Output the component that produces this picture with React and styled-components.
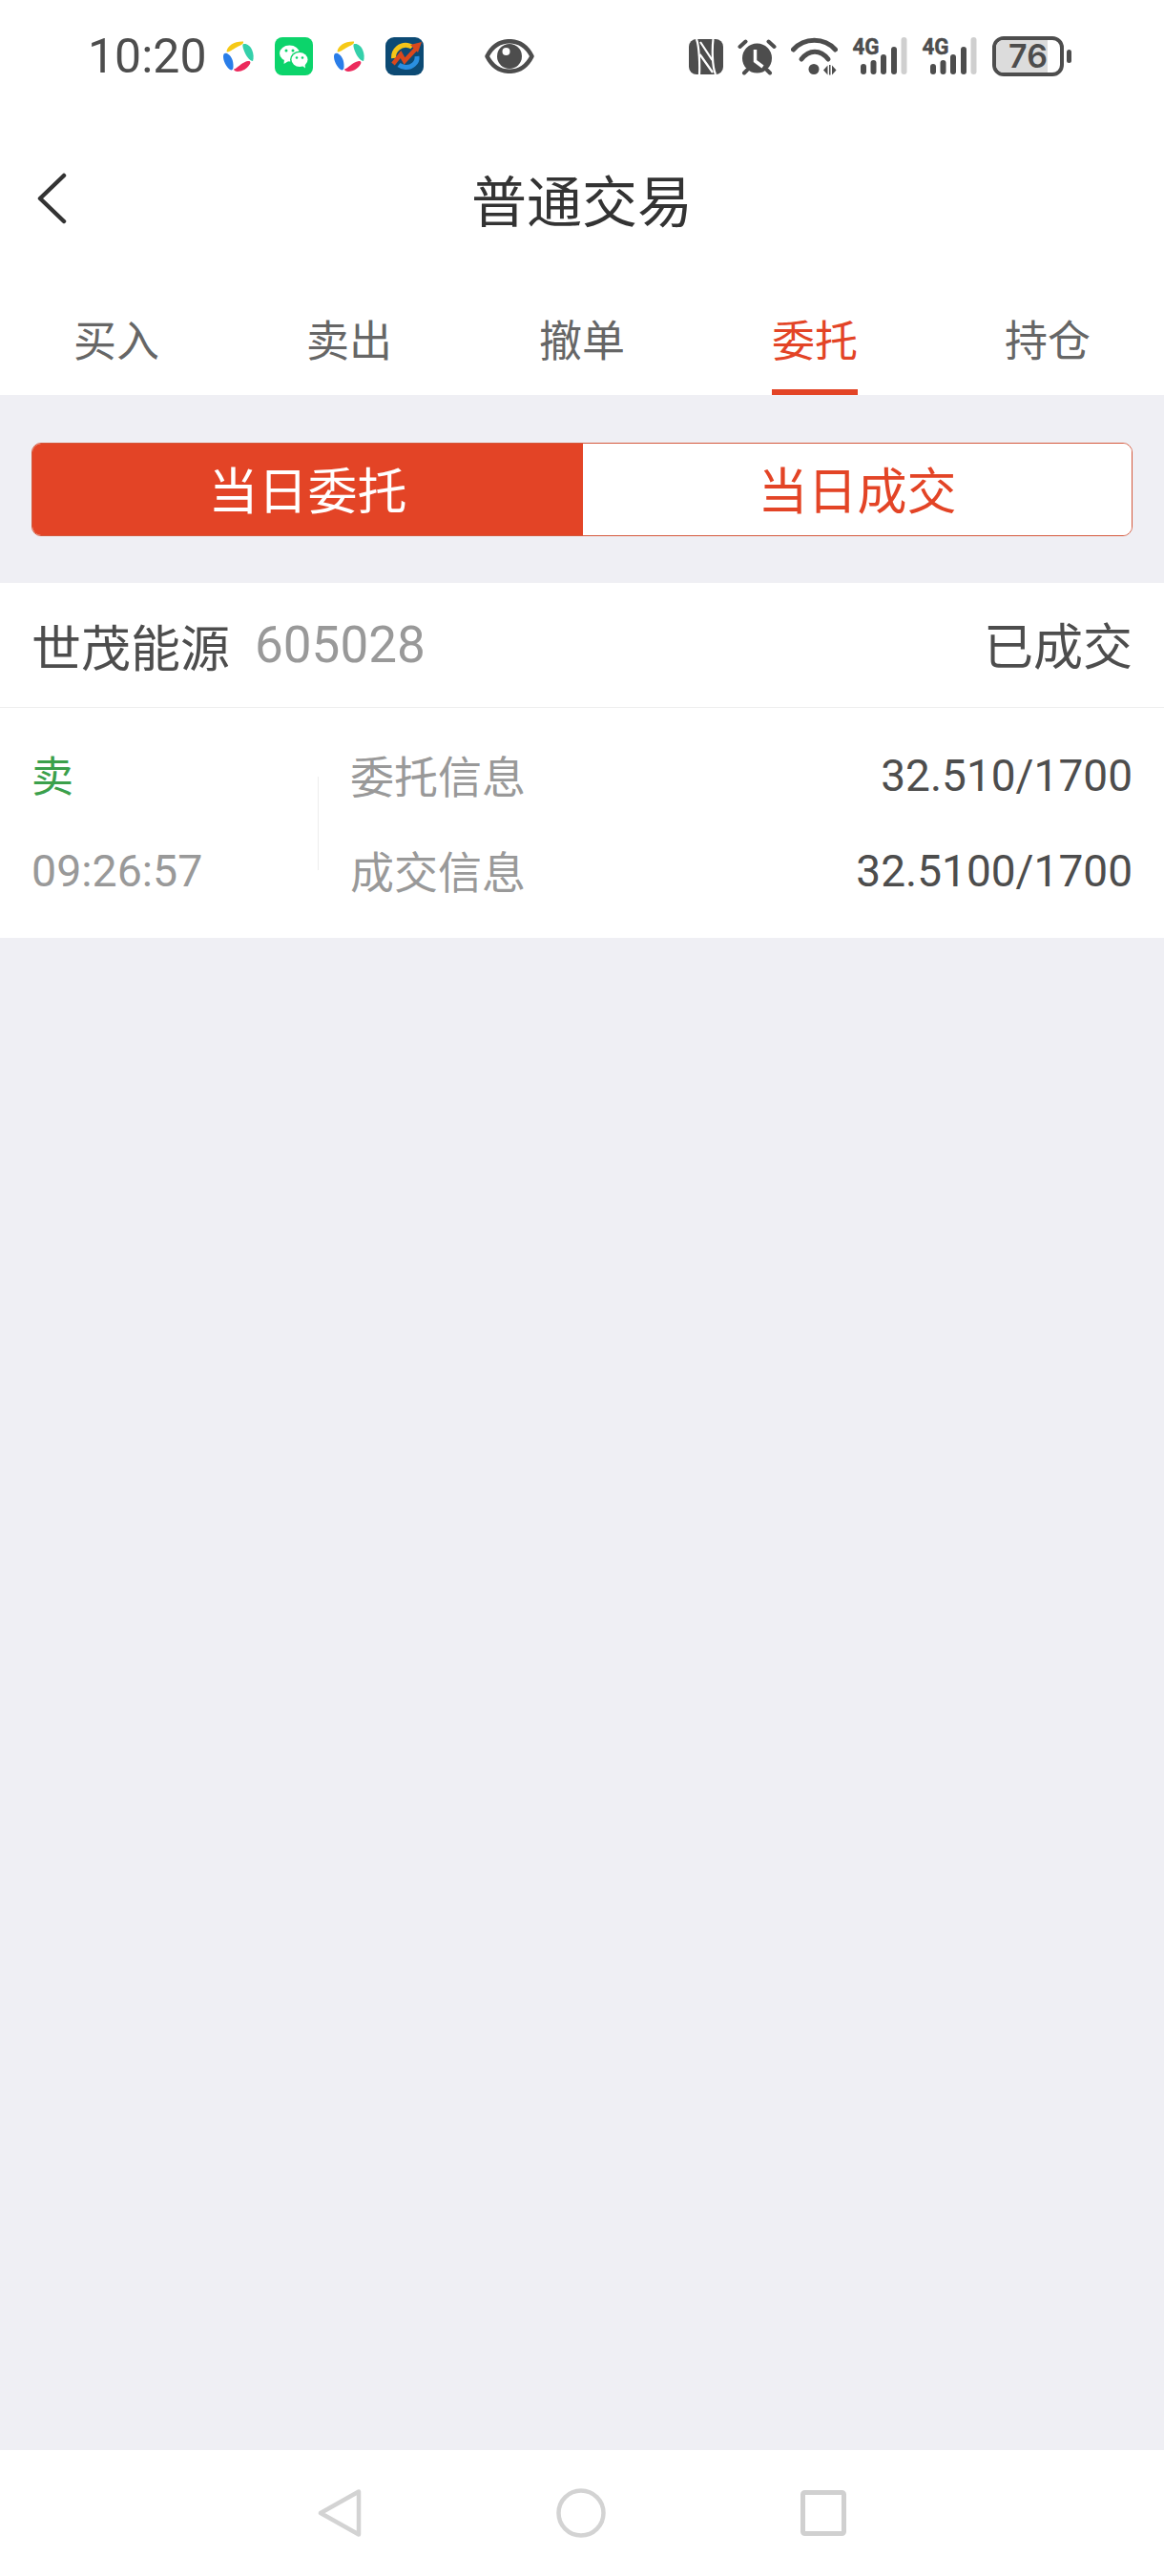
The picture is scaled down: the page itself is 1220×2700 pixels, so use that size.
import React from "react";
import styled, { createGlobalStyle } from "styled-components";

const GlobalStyle = createGlobalStyle`
  html, body {
    margin: 0;
    padding: 0;
    background: #fff;
  }
  * {
    box-sizing: border-box;
  }
`;

const cjk = `"Noto Sans CJK SC", sans-serif`;
const digits = `Roboto, "Noto Sans CJK SC", sans-serif`;

const Screen = styled.div`
  width: 1220px;
  height: 2700px;
  display: flex;
  flex-direction: column;
  background: #efeff4;
  font-family: ${cjk};
`;

const StatusBar = styled.div`
  height: 118px;
  flex: none;
  background: #fff;
  display: flex;
  align-items: center;
  justify-content: space-between;
  padding: 0 97px 0 92px;
`;

const StatusGroup = styled.div`
  display: flex;
  align-items: center;
  gap: ${(p) => p.$gap}px;
`;

const Clock = styled.span`
  font-family: ${digits};
  font-size: 50px;
  line-height: 58px;
  color: #4d4d4d;
  margin-right: -5px;
`;

const EyeWrap = styled.span`
  display: flex;
  margin-left: 42px;
`;

const Battery = styled.div`
  display: flex;
  align-items: center;
  gap: 3px;
  margin-left: 1px;
`;

const BatteryBody = styled.div`
  position: relative;
  width: 75px;
  height: 42px;
  border: 4px solid #4d4d4d;
  border-radius: 12px;
  overflow: hidden;
  display: flex;
  align-items: center;
  justify-content: center;
  font-family: "Inter", Roboto, sans-serif;
  font-size: 34px;
  font-weight: 600;
  color: #4d4d4d;
`;

const BatteryFill = styled.div`
  position: absolute;
  left: 0;
  top: 0;
  bottom: 0;
  background: #dcdcdc;
`;

const BatteryText = styled.span`
  position: relative;
  line-height: 1;
`;

const BatteryNub = styled.div`
  width: 5px;
  height: 14px;
  border-radius: 3px;
  background: #4d4d4d;
`;

const SignalSvg = styled.svg`
  margin-top: -8px;
`;

const NavBar = styled.div`
  height: 184px;
  flex: none;
  background: #fff;
  display: grid;
  grid-template-columns: 1fr auto 1fr;
  align-items: center;
  padding: 0 38px 4px;
`;

const BackButton = styled.span`
  display: flex;
`;

const Title = styled.div`
  font-size: 58px;
  line-height: 80px;
  color: #333;
`;

const Tabs = styled.div`
  height: 112px;
  flex: none;
  background: #fff;
  display: flex;
`;

const Tab = styled.div`
  flex: 1;
  display: flex;
  justify-content: center;
`;

const TabLabel = styled.div`
  display: flex;
  align-items: center;
  padding-bottom: 2px;
  border-bottom: 6px solid ${(p) => (p.$active ? "#e34426" : "transparent")};
  font-size: 45px;
  color: ${(p) => (p.$active ? "#e34426" : "#666")};
`;

const SegmentWrap = styled.div`
  flex: none;
  padding: 50px 33px 49px;
`;

const Segment = styled.div`
  height: 98px;
  display: flex;
  background: #fff;
  border: 1px solid #d4583c;
  border-radius: 10px;
  overflow: hidden;
`;

const SegmentItem = styled.div`
  flex: ${(p) => (p.$active ? "0 0 577px" : "1")};
  display: flex;
  align-items: center;
  justify-content: center;
  padding-bottom: 4px;
  font-size: 52px;
  color: ${(p) => (p.$active ? "#fff" : "#e34426")};
  background: ${(p) => (p.$active ? "#e34426" : "#fff")};
`;

const Card = styled.div`
  flex: none;
  background: #fff;
`;

const CardHeader = styled.div`
  height: 131px;
  display: flex;
  align-items: center;
  justify-content: space-between;
  padding: 0 33px;
  border-bottom: 1px solid #eeeeee;
`;

const Stock = styled.div`
  display: flex;
  align-items: center;
  gap: 26px;
`;

const StockName = styled.span`
  font-size: 52px;
  color: #4d4d4d;
`;

const StockCode = styled.span`
  font-family: ${digits};
  font-size: 53px;
  color: #999;
`;

const Status = styled.span`
  padding-bottom: 4px;
  font-size: 52px;
  color: #4d4d4d;
`;

const Detail = styled.div`
  height: 241px;
  display: flex;
  align-items: center;
  padding: 0 33px;
`;

const Side = styled.div`
  width: 300px;
  flex: none;
  display: grid;
  grid-auto-rows: 100px;
`;

const SideLabel = styled.div`
  display: flex;
  align-items: center;
  padding-bottom: 4px;
  font-size: 44px;
  color: #3ba04b;
`;

const SideTime = styled.div`
  display: flex;
  align-items: center;
  font-family: ${digits};
  font-size: 46.500px;
  color: #999;
`;

const VDivider = styled.div`
  width: 1px;
  height: 98px;
  flex: none;
  background: #eeeeee;
`;

const InfoList = styled.div`
  flex: 1;
  padding-left: 33px;
  display: grid;
  grid-auto-rows: 100px;
`;

const InfoRow = styled.div`
  display: flex;
  align-items: center;
  justify-content: space-between;
`;

const InfoLabel = styled.span`
  padding-bottom: 4px;
  font-size: 46px;
  color: #999;
`;

const InfoValue = styled.span`
  font-family: ${digits};
  font-size: 46px;
  color: #4d4d4d;
`;

const Blank = styled.div`
  flex: 1;
`;

const SystemBar = styled.div`
  height: 132px;
  flex: none;
  background: #fff;
  display: flex;
  align-items: center;
  padding: 0 333px;
  justify-content: space-between;
`;

const StarLogo = () => (
  <svg width="32" height="32" viewBox="0 0 32 32">
    <path d="M3.500 11C4 5 12 0 21 .5c.5 2.500-2 3.500-6 5.500C11 8 5 13 3.500 11Z" fill="#f6c916" />
    <path d="M20.500 3.500C24 2 28 5 30 9c2 4 2 9 1 12-3 0-6-4-8-8-1.500-3-3-7-2.500-9.500Z" fill="#34d0aa" />
    <path d="M11 29.500c4-.5 8-7.500 15-8.500 2-.5 3 1 2 3-2 4-7 8-13 8-2 0-4-1-4-2.500Z" fill="#ec2a5c" />
    <path d="M0 16c0-3 2-4 4-3 4 2 7 7 6.500 14 0 3-1.500 4-3.500 3C3 27 0 21 0 16Z" fill="#2a7de8" />
  </svg>
);

const WeChatLogo = () => (
  <svg width="40" height="40" viewBox="0 0 40 40">
    <rect width="40" height="40" rx="8" fill="#0cd46b" />
    <ellipse cx="15.500" cy="17" rx="10.500" ry="8.500" fill="#fff" />
    <path d="M10 23l-.5 5 5-3Z" fill="#fff" />
    <ellipse cx="26" cy="23.500" rx="10" ry="9" fill="#0cd46b" />
    <ellipse cx="26" cy="23.500" rx="8.500" ry="7.500" fill="#fff" />
    <path d="M29 30l3 2.500-.5-4.500Z" fill="#fff" />
    <circle cx="12" cy="14" r="1.500" fill="#0cd46b" />
    <circle cx="19" cy="14" r="1.500" fill="#0cd46b" />
    <circle cx="23" cy="21.500" r="1.300" fill="#0cd46b" />
    <circle cx="29" cy="21.500" r="1.300" fill="#0cd46b" />
  </svg>
);

const TonghuashunLogo = () => (
  <svg width="40" height="40" viewBox="0 0 40 40">
    <rect width="40" height="40" rx="9" fill="#0c4a74" />
    <path d="M8.500 22C8 13 16 7.500 23 8.500c2 .3 4 1 5 2" fill="none" stroke="#f5c518" strokeWidth="5" />
    <path d="M33 20c1 7-6 12-12 11.500-2.500-.2-5-1-7-2.500" fill="none" stroke="#2a8fe0" strokeWidth="5" />
    <path d="M8 28l8-10 4 7 12-13" fill="none" stroke="#d9481c" strokeWidth="4.500" />
    <path d="M38 5l-12 3 8 8Z" fill="#d9481c" />
  </svg>
);

const EyeIcon = () => (
  <svg width="52" height="36" viewBox="0 0 52 36">
    <path d="M2.500 18C8 7 17 2.200 26 2.200S44 7 49.500 18C44 29 35 33.800 26 33.800S8 29 2.500 18Z" fill="none" stroke="#4d4d4d" strokeWidth="4.500" strokeLinejoin="round" />
    <circle cx="26" cy="18" r="13" fill="#4d4d4d" />
    <circle cx="22.500" cy="13" r="4" fill="#fff" />
  </svg>
);

const NfcIcon = () => (
  <svg width="36" height="37" viewBox="0 0 36 37">
    <rect width="36" height="37" rx="8" fill="#4d4d4d" />
    <path d="M8 0c3 8 3.500 28 3 37" fill="none" stroke="#fff" strokeWidth="2.200" />
    <path d="M25.500 0c-1 8-1.500 28 2.500 37" fill="none" stroke="#fff" strokeWidth="2.200" />
    <path d="M12 3l12.500 19M11.500 16L25 35" fill="none" stroke="#fff" strokeWidth="2.200" />
  </svg>
);

const AlarmIcon = () => (
  <svg width="41" height="39" viewBox="0 0 41 39">
    <circle cx="20.500" cy="21" r="15.500" fill="#4d4d4d" />
    <path d="M2.500 9l6-5.500M38.500 9l-6-5.500M7 36.500l3-3M34 36.500l-3-3" stroke="#4d4d4d" strokeWidth="4" strokeLinecap="round" />
    <path d="M18.500 12v12l8 6" fill="none" stroke="#fff" strokeWidth="3.500" />
  </svg>
);

const WifiIcon = () => (
  <svg width="49" height="40" viewBox="0 0 49 40">
    <path d="M2.500 13C14 0 35 0 46.500 13" fill="none" stroke="#4d4d4d" strokeWidth="5" strokeLinecap="round" />
    <path d="M11 23c8-10.500 20-10.500 28 0" fill="none" stroke="#4d4d4d" strokeWidth="5" strokeLinecap="round" />
    <circle cx="24" cy="33.500" r="5.500" fill="#4d4d4d" />
    <path d="M34 34.500l4.500-5v10ZM40 29h1.500v10.500H40ZM43 29.500l4.500 5-4.500 5Z" fill="#4d4d4d" />
  </svg>
);

// taller than the 40px drawing so the 4G text box stays inside the svg
const SignalIcon = () => (
  <SignalSvg width="58" height="48" viewBox="0 -8 58 48">
    <text x="0.500" y="18" fontFamily="Roboto, sans-serif" fontWeight="700" fontSize="24" fill="#4d4d4d" stroke="#4d4d4d" strokeWidth="0.500" textLength="28" lengthAdjust="spacingAndGlyphs">4G</text>
    <rect x="9" y="28" width="6" height="11" rx="3" fill="#4d4d4d" />
    <rect x="19.500" y="24" width="6" height="15" rx="3" fill="#4d4d4d" />
    <rect x="30" y="18" width="6" height="21" rx="3" fill="#4d4d4d" />
    <rect x="41" y="10" width="6" height="29" rx="3" fill="#4d4d4d" />
    <rect x="51.500" y="0" width="6" height="39" rx="3" fill="#cfcfcf" />
  </SignalSvg>
);

const ChevronIcon = () => (
  <svg width="32" height="54" viewBox="0 0 32 54">
    <path d="M29 3L4 27l25 24" fill="none" stroke="#333" strokeWidth="4.500" strokeLinecap="round" strokeLinejoin="round" />
  </svg>
);

const BackTriangle = () => (
  <svg width="46" height="52" viewBox="0 0 46 52">
    <path d="M43 3.500v45L3 26Z" fill="none" stroke="#d3d3d3" strokeWidth="4.500" strokeLinejoin="round" />
  </svg>
);

const HomeCircle = () => (
  <svg width="52" height="52" viewBox="0 0 52 52">
    <circle cx="26" cy="26" r="23.500" fill="none" stroke="#d3d3d3" strokeWidth="4.500" />
  </svg>
);

const RecentSquare = () => (
  <svg width="48" height="48" viewBox="0 0 48 48">
    <rect x="2.500" y="2.500" width="43" height="43" rx="2" fill="none" stroke="#d0d0d0" strokeWidth="5" />
  </svg>
);

const tabs = ["买入", "卖出", "撤单", "委托", "持仓"];

export default function App() {
  return (
    <>
      <GlobalStyle />
      <Screen>
        <StatusBar>
          <StatusGroup $gap={22}>
            <Clock>10:20</Clock>
            <StarLogo />
            <WeChatLogo />
            <StarLogo />
            <TonghuashunLogo />
            <EyeWrap>
              <EyeIcon />
            </EyeWrap>
          </StatusGroup>
          <StatusGroup $gap={15}>
            <NfcIcon />
            <AlarmIcon />
            <WifiIcon />
            <SignalIcon />
            <SignalIcon />
            <Battery>
              <BatteryBody>
                <BatteryFill style={{ width: "80%" }} />
                <BatteryText>76</BatteryText>
              </BatteryBody>
              <BatteryNub />
            </Battery>
          </StatusGroup>
        </StatusBar>

        <NavBar>
          <BackButton>
            <ChevronIcon />
          </BackButton>
          <Title>普通交易</Title>
        </NavBar>

        <Tabs>
          {tabs.map((t) => (
            <Tab key={t}>
              <TabLabel $active={t === "委托"}>{t}</TabLabel>
            </Tab>
          ))}
        </Tabs>

        <SegmentWrap>
          <Segment>
            <SegmentItem $active>当日委托</SegmentItem>
            <SegmentItem>当日成交</SegmentItem>
          </Segment>
        </SegmentWrap>

        <Card>
          <CardHeader>
            <Stock>
              <StockName>世茂能源</StockName>
              <StockCode>605028</StockCode>
            </Stock>
            <Status>已成交</Status>
          </CardHeader>
          <Detail>
            <Side>
              <SideLabel>卖</SideLabel>
              <SideTime>09:26:57</SideTime>
            </Side>
            <VDivider />
            <InfoList>
              <InfoRow>
                <InfoLabel>委托信息</InfoLabel>
                <InfoValue>32.510/1700</InfoValue>
              </InfoRow>
              <InfoRow>
                <InfoLabel>成交信息</InfoLabel>
                <InfoValue>32.5100/1700</InfoValue>
              </InfoRow>
            </InfoList>
          </Detail>
        </Card>

        <Blank />

        <SystemBar>
          <BackTriangle />
          <HomeCircle />
          <RecentSquare />
        </SystemBar>
      </Screen>
    </>
  );
}
